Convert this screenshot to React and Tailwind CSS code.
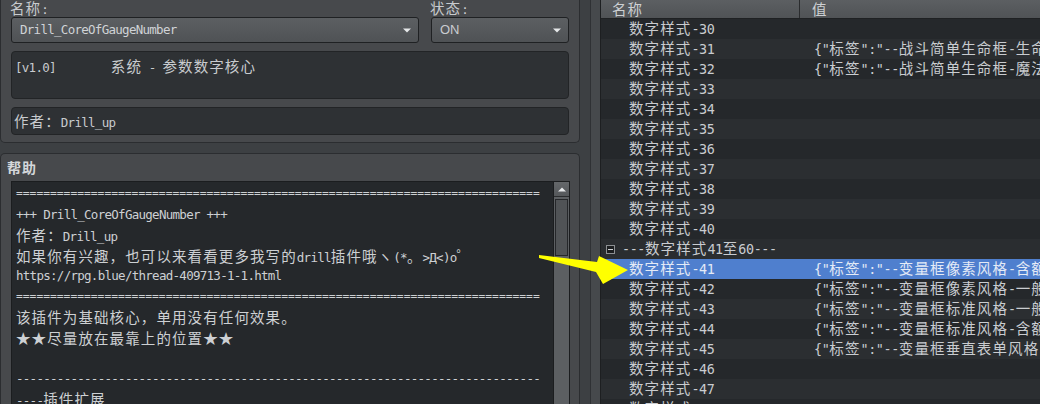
import React from "react";

const CJK_RE = /([\u2E80-\u9FFF\uFF00-\uFFEF\u2605\u3000-\u303F]+)/;
const CJK_CLS = "font-['Noto_Sans_CJK_SC',sans-serif] text-[14.5px] tracking-[1.1px]";
const LAT_L = "text-[12.5px] tracking-[-0.72px]";
const LAT_R = "text-[13.4px] tracking-[-0.4px]";

function M({ t }) {
  const parts = t.split(CJK_RE);
  return parts.map((p, i) =>
    i % 2 === 1 ? (
      <span key={i} className={CJK_CLS}>
        {p}
      </span>
    ) : (
      <React.Fragment key={i}>{p}</React.Fragment>
    )
  );
}

function Arrow() {
  return (
    <svg width="8" height="5" viewBox="0 0 8 5" className="shrink-0">
      <path d="M0 0.5 L8 0.5 L4 4.5 Z" fill="#e6e8ea" />
    </svg>
  );
}

function Combo({ children, w, sans }) {
  return (
    <div
      className={`${w} h-[26px] rounded-[3px] border border-[#1f2123] bg-gradient-to-b from-[#5c5f62] to-[#4f5255] flex items-center pl-[8px] pr-[7px] justify-between`}
    >
      <span
        className={
          sans
            ? "font-['Liberation_Sans',sans-serif] text-[13px] text-[#c9ccd0]"
            : `${LAT_L} text-[#d0d3d6]`
        }
      >
        {children}
      </span>
      <Arrow />
    </div>
  );
}

const helpLines = [
  "=".repeat(77),
  "+++ Drill_CoreOfGaugeNumber +++",
  "作者：Drill_up",
  "如果你有兴趣，也可以来看看更多我写的drill插件哦ヽ(*。>Д<)o゜",
  "https://rpg.blue/thread-409713-1-1.html",
  "=".repeat(77),
  "该插件为基础核心，单用没有任何效果。",
  "★★尽量放在最靠上的位置★★",
  "",
  "-".repeat(77),
  "----插件扩展",
];

const rows = [
  { n: "数字样式-30", v: "" },
  { n: "数字样式-31", v: '{"标签":"--战斗简单生命框-生命' },
  { n: "数字样式-32", v: '{"标签":"--战斗简单生命框-魔法' },
  { n: "数字样式-33", v: "" },
  { n: "数字样式-34", v: "" },
  { n: "数字样式-35", v: "" },
  { n: "数字样式-36", v: "" },
  { n: "数字样式-37", v: "" },
  { n: "数字样式-38", v: "" },
  { n: "数字样式-39", v: "" },
  { n: "数字样式-40", v: "" },
  { n: "---数字样式41至60---", v: "", group: true },
  { n: "数字样式-41", v: '{"标签":"--变量框像素风格-含额', sel: true },
  { n: "数字样式-42", v: '{"标签":"--变量框像素风格-一般' },
  { n: "数字样式-43", v: '{"标签":"--变量框标准风格-一般' },
  { n: "数字样式-44", v: '{"标签":"--变量框标准风格-含额' },
  { n: "数字样式-45", v: '{"标签":"--变量框垂直表单风格-' },
  { n: "数字样式-46", v: "" },
  { n: "数字样式-47", v: "" },
  { n: "数字样式-48", v: "" },
];

export default function App() {
  return (
    <div className="relative w-[1040px] h-[404px] overflow-hidden bg-[#3d4043] flex font-['DejaVu_Sans_Mono','Noto_Sans_CJK_SC',monospace]">
      {/* Left column */}
      <div className="w-[590px] shrink-0 flex flex-col">
        {/* Top group */}
        <div className="w-[580px] h-[143px] shrink-0 bg-[#47494c] border border-t-0 border-[#2b2d30] rounded-b-[5px] pl-[10px] pr-[10px]">
          <div className="flex gap-[12px]">
            <div className="w-[408px] flex flex-col">
              <div className={`h-[17px] leading-[16px] -ml-[1px] ${LAT_L} text-[#c8cbce] overflow-hidden`}>
                <M t="名称:" />
              </div>
              <Combo w="w-[408px]">Drill_CoreOfGaugeNumber</Combo>
            </div>
            <div className="w-[138px] flex flex-col">
              <div className={`h-[17px] leading-[16px] -ml-[1px] ${LAT_L} text-[#c8cbce] overflow-hidden`}>
                <M t="状态:" />
              </div>
              <Combo w="w-[138px]" sans>
                ON
              </Combo>
            </div>
          </div>
          <div className={`mt-[8px] h-[48px] rounded-[4px] border border-[#222426] bg-[#2e3134] pl-[3px] pt-[4px] ${LAT_L} leading-[20px] text-[#c8cbce] whitespace-nowrap`}>
            <span>[v1.0]</span>
            <span className="ml-[55px]">
              <M t="系统 - 参数数字核心" />
            </span>
          </div>
          <div className={`mt-[8px] h-[28px] rounded-[4px] border border-[#222426] bg-[#2e3134] pl-[2px] flex items-center ${LAT_L} text-[#c8cbce] whitespace-nowrap`}>
            <span>
              <M t="作者：Drill_up" />
            </span>
          </div>
        </div>

        {/* Help group */}
        <div className="mt-[10px] w-[580px] flex-1 bg-[#47494c] border border-b-0 border-[#2b2d30] rounded-t-[5px] flex flex-col min-h-0">
          <div className="h-[27px] shrink-0 pl-[6px] flex items-center">
            <span className="font-['Noto_Sans_CJK_SC',sans-serif] font-bold text-[14px] tracking-[1px] text-[#d4d7da]">
              帮助
            </span>
          </div>
          <div className="ml-[10px] w-[559px] flex-1 min-h-0 border border-b-0 border-[#1b1d1f] bg-[#25282b] flex overflow-hidden">
            <div className={`flex-1 pl-[4px] pt-[2px] ${LAT_L} leading-[20.5px] text-[#cdd0d3] whitespace-nowrap overflow-hidden`}>
              {helpLines.map((l, i) =>
                l.startsWith("===") ? (
                  <div key={i} className="h-[20.5px] text-[11.3px] tracking-normal">
                    {l}
                  </div>
                ) : (
                  <div key={i} className="h-[20.5px]">
                    <M t={l} />
                  </div>
                )
              )}
            </div>
            <div className="w-[16px] shrink-0 bg-[#5c5f62] border-l border-[#1b1d1f] flex flex-col">
              <div className="h-[15px] bg-gradient-to-b from-[#64676a] to-[#55585b] border-b border-[#2a2c2e] flex items-center justify-center">
                <svg width="8" height="5" viewBox="0 0 8 5">
                  <path d="M0 4.5 L8 4.5 L4 0.5 Z" fill="#e6e8ea" />
                </svg>
              </div>
              <div className="mt-[2px] mx-[1px] h-[57px] border border-[#25272a] bg-[#505356]" />
            </div>
          </div>
        </div>
      </div>

      {/* Right panel */}
      <div className="flex-1 flex min-w-0">
        <div className="w-[10px] shrink-0 bg-[#46494c] border-l border-[#2f3134]" />
        <div className="flex-1 min-w-0 flex flex-col border-l border-[#1d1f21] bg-[#25282b]">
          <div className="h-[19px] shrink-0 flex bg-gradient-to-b from-[#5c5f62] to-[#505356] border-b border-[#1f2123] text-[#cdd0d3]">
            <div className="w-[199px] shrink-0 border-r border-[#2a2c2e] pl-[11px] flex items-center">
              <span className={CJK_CLS}>名称</span>
            </div>
            <div className="flex-1 pl-[12px] flex items-center">
              <span className={CJK_CLS}>值</span>
            </div>
          </div>
          <div className="flex-1 overflow-hidden">
            {rows.map((r, i) => {
              const num = parseInt(r.n.slice(-2), 10);
              const bg = r.sel
                ? "bg-[#4f7fce] text-[#e4ebf7]"
                : r.group
                ? "bg-[#2a2d30] text-[#c9ccd0]"
                : num % 2 === 1
                ? "bg-[#2b2e31] text-[#c9ccd0]"
                : "bg-[#25282b] text-[#c9ccd0]";
              return (
                <div
                  key={i}
                  className={`h-[20px] flex items-center whitespace-nowrap ${LAT_R} ${bg}`}
                >
                  {r.group ? (
                    <div className="w-[199px] shrink-0 flex items-center pl-[5px]">
                      <div className="w-[9px] h-[9px] border border-[#8c8f92] bg-[#1c1e20] flex items-center justify-center">
                        <div className="w-[5px] h-[1px] bg-[#d0d3d6]" />
                      </div>
                      <span className="ml-[7px]">
                        <M t={r.n} />
                      </span>
                    </div>
                  ) : (
                    <div className="w-[199px] shrink-0 pl-[28px]">
                      <M t={r.n} />
                    </div>
                  )}
                  <div className="pl-[14px]">
                    <M t={r.v} />
                  </div>
                </div>
              );
            })}
          </div>
        </div>
      </div>

      {/* Yellow arrow annotation */}
      <svg
        className="absolute left-0 top-0 pointer-events-none"
        width="1040"
        height="404"
        viewBox="0 0 1040 404"
      >
        <polygon
          points="539,255 597,262 599,256 628,270 603,284 596,272 539,258"
          fill="#ffff00"
        />
      </svg>
    </div>
  );
}
